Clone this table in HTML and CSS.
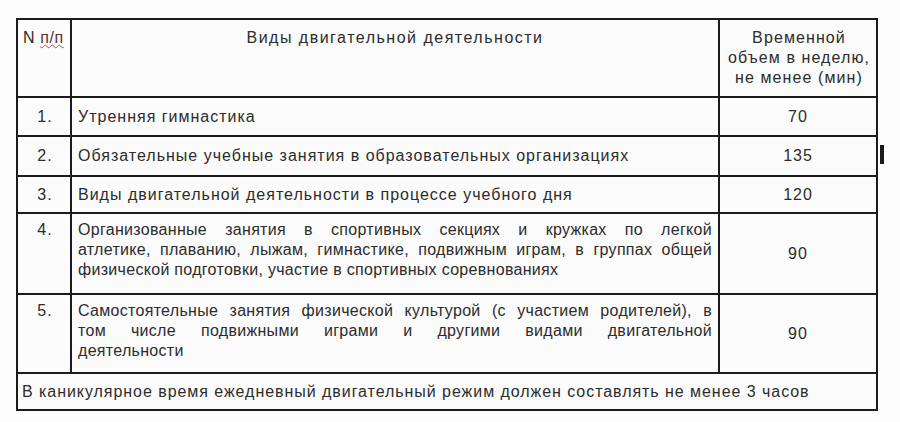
FILE: index.html
```html
<!DOCTYPE html>
<html lang="ru">
<head>
<meta charset="utf-8">
<title>Двигательная деятельность</title>
<link rel="stylesheet" href="styles.css">
</head>
<body>
<div class="page">
  <table class="plan">
    <colgroup>
      <col class="c-num">
      <col class="c-kind">
      <col class="c-time">
    </colgroup>
    <tr class="r-head">
      <td class="num head-num">N <span class="spell">п/п</span></td>
      <td class="kind head-kind">Виды двигательной деятельности</td>
      <td class="time head-time">
        <span class="hl">Временной</span>
        <span class="hl">объем в неделю,</span>
        <span class="hl">не менее (мин)</span>
      </td>
    </tr>
    <tr class="r-1">
      <td class="num">1.</td>
      <td class="kind">Утренняя гимнастика</td>
      <td class="time">70</td>
    </tr>
    <tr class="r-2">
      <td class="num">2.</td>
      <td class="kind">Обязательные учебные занятия в образовательных организациях</td>
      <td class="time">135</td>
    </tr>
    <tr class="r-3">
      <td class="num">3.</td>
      <td class="kind">Виды двигательной деятельности в процессе учебного дня</td>
      <td class="time">120</td>
    </tr>
    <tr class="r-4">
      <td class="num top">4.</td>
      <td class="kind top">
        <span class="jl">Организованные занятия в спортивных секциях и кружках по легкой</span>
        <span class="jl">атлетике, плаванию, лыжам, гимнастике, подвижным играм, в группах общей</span>
        <span class="ll">физической подготовки, участие в спортивных соревнованиях</span>
      </td>
      <td class="time">90</td>
    </tr>
    <tr class="r-5">
      <td class="num top">5.</td>
      <td class="kind top">
        <span class="jl">Самостоятельные занятия физической культурой (с участием родителей), в</span>
        <span class="jl">том числе подвижными играми и другими видами двигательной</span>
        <span class="ll">деятельности</span>
      </td>
      <td class="time">90</td>
    </tr>
    <tr class="r-foot">
      <td class="foot" colspan="3">В каникулярное время ежедневный двигательный режим должен составлять не менее 3 часов</td>
    </tr>
  </table>
  <div class="mark"></div>
</div>
</body>
</html>
```

FILE: styles.css
```css
html, body {
  margin: 0;
  padding: 0;
  background: #fdfdfd;
}

.page {
  display: flex;
  align-items: flex-start;
  padding: 18px 0 0 16px;
  gap: 2px;
}

.plan {
  border-collapse: collapse;
  table-layout: fixed;
  width: 862px;
  font-family: "Liberation Sans", Arial, sans-serif;
  font-size: 16px;
  line-height: 20px;
  letter-spacing: 1px;
  color: #2c2c2c;
  background: #fbfbfb;
}

.c-num { width: 54px; }
.c-kind { width: 648px; }
.c-time { width: 158px; }

.plan td {
  border: 2px solid #1b1b1b;
  padding: 0;
  vertical-align: middle;
}

.r-head { height: 78px; }
.r-1 { height: 39px; }
.r-2 { height: 40px; }
.r-3 { height: 37px; }
.r-4 { height: 81px; }
.r-5 { height: 79px; }
.r-foot { height: 37px; }

.plan td.num {
  text-align: center;
  padding-left: 2px;
}

.plan td.kind {
  padding: 0 6px 0 6px;
  text-align: left;
}

.plan td.time {
  text-align: center;
}

.plan td.top {
  vertical-align: top;
  padding-top: 6px;
}

.plan td.head-num {
  vertical-align: top;
  text-align: left;
  white-space: nowrap;
  padding: 8px 0 0 5px;
  letter-spacing: 0.6px;
}

.spell {
  color: #5a3030;
  text-decoration: underline wavy #d24a4a;
  text-decoration-thickness: 1px;
  text-underline-offset: 1px;
}

.plan td.head-kind {
  vertical-align: top;
  text-align: center;
  padding-top: 8px;
  letter-spacing: 1.5px;
}

.plan td.head-time {
  vertical-align: top;
  padding: 8px 0 0 2px;
  letter-spacing: 1.1px;
}

.hl {
  display: block;
  white-space: nowrap;
}

.jl {
  display: block;
  white-space: nowrap;
  letter-spacing: 0.3px;
  text-align: justify;
  text-align-last: justify;
}

.ll {
  display: block;
  white-space: nowrap;
  letter-spacing: 0.3px;
  text-align: left;
}

.plan td.foot {
  padding-left: 4px;
  letter-spacing: 0.95px;
}

.mark {
  width: 4px;
  height: 19px;
  margin-top: 127px;
  background: #1b1b1b;
}
```
